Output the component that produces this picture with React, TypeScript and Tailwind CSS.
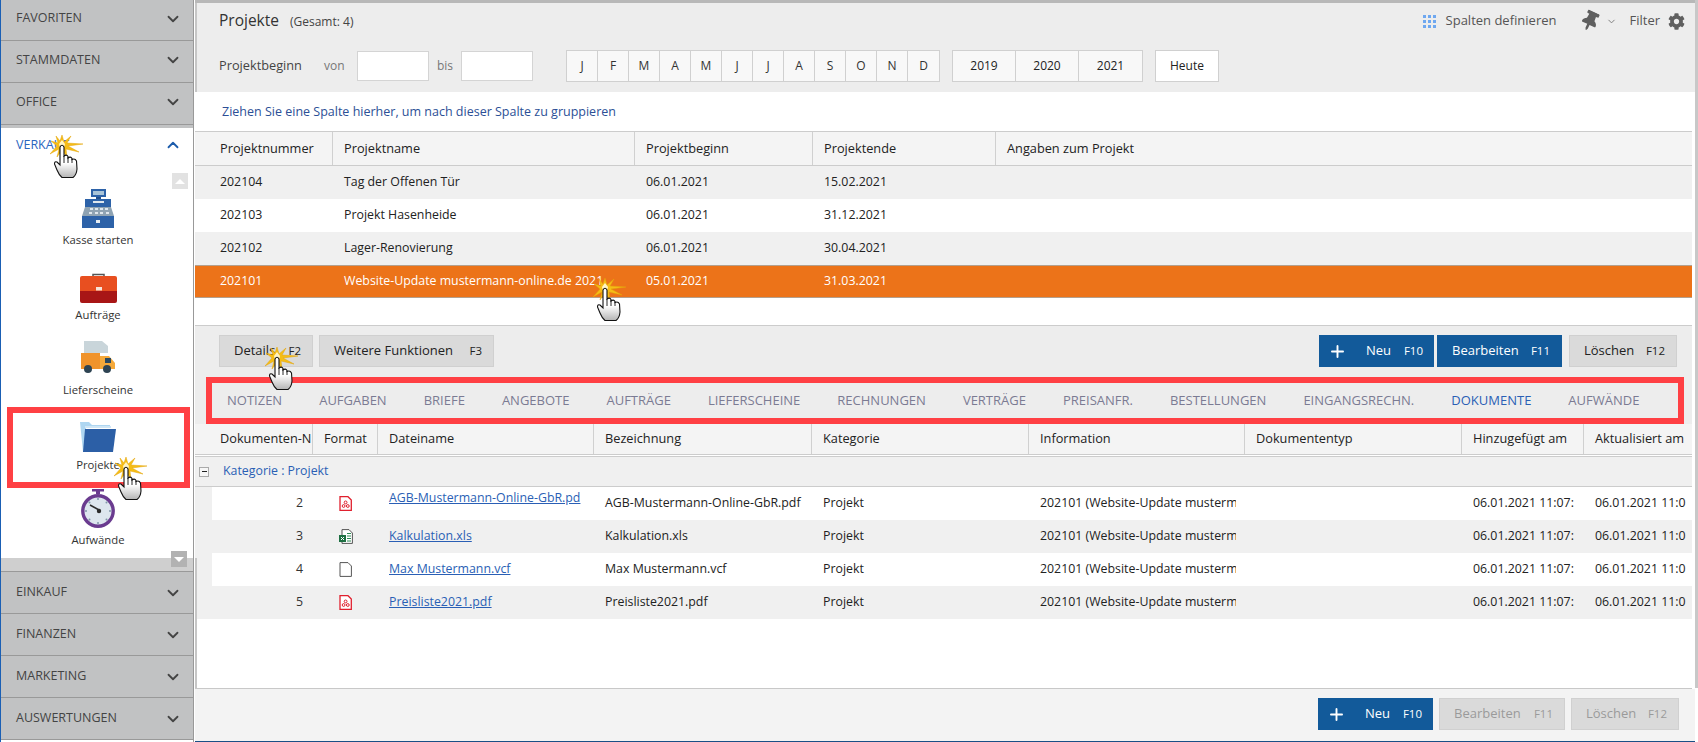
import { ChevronDown, ChevronUp, Plus } from 'lucide-react';
import { FaCog, FaThumbtack } from 'react-icons/fa';

const font = { fontFamily: '"Open Sans", "Noto Sans", sans-serif' };

const months = ['J', 'F', 'M', 'A', 'M', 'J', 'J', 'A', 'S', 'O', 'N', 'D'];
const years = ['2019', '2020', '2021'];

const projects = [
  { nr: '202104', name: 'Tag der Offenen Tür', start: '06.01.2021', end: '15.02.2021', bg: 'bg-[#f0f0f0] text-[#222]' },
  { nr: '202103', name: 'Projekt Hasenheide', start: '06.01.2021', end: '31.12.2021', bg: 'bg-white text-[#222]' },
  { nr: '202102', name: 'Lager-Renovierung', start: '06.01.2021', end: '30.04.2021', bg: 'bg-[#f0f0f0] text-[#222]' },
  { nr: '202101', name: 'Website-Update mustermann-online.de 2021', start: '05.01.2021', end: '31.03.2021', bg: 'bg-[#ec7319] text-white border-y border-[#b3a08e]' },
];

const tabs = ['NOTIZEN', 'AUFGABEN', 'BRIEFE', 'ANGEBOTE', 'AUFTRÄGE', 'LIEFERSCHEINE', 'RECHNUNGEN', 'VERTRÄGE', 'PREISANFR.', 'BESTELLUNGEN', 'EINGANGSRECHN.', 'DOKUMENTE', 'AUFWÄNDE'];

const docs = [
  { nr: '2', type: 'pdf', file: 'AGB-Mustermann-Online-GbR.pd', title: 'AGB-Mustermann-Online-GbR.pdf', bg: 'bg-white' },
  { nr: '3', type: 'xls', file: 'Kalkulation.xls', title: 'Kalkulation.xls', bg: 'bg-[#f0f0f0]' },
  { nr: '4', type: 'vcf', file: 'Max Mustermann.vcf', title: 'Max Mustermann.vcf', bg: 'bg-white' },
  { nr: '5', type: 'pdf', file: 'Preisliste2021.pdf', title: 'Preisliste2021.pdf', bg: 'bg-[#f0f0f0]' },
];

function SideRow({ label, first, upper }: { label: string; first?: boolean; upper?: boolean }) {
  return (
    <div className={`flex items-center justify-between pl-[15px] pr-[11px] bg-[#c1c2c3] border-b border-[#999] ${first ? 'h-[41px]' : 'h-[42px]'} ${upper ? 'pb-[3px]' : ''}`}>
      <span className="text-[12.5px] font-medium text-[#444]">{label}</span>
      <ChevronDown size={18} strokeWidth={2.4} className="text-[#444]" />
    </div>
  );
}

function CashIcon() {
  return (
    <svg width="32" height="39" viewBox="0 0 32 39">
      <rect x="9" y="0" width="15" height="8" fill="#2d62a8" />
      <rect x="11" y="2" width="11" height="4" fill="#a9c4d8" />
      <rect x="14" y="8" width="5" height="2" fill="#24508c" />
      <rect x="3" y="10" width="26" height="8" fill="#2d62a8" />
      <rect x="11" y="12" width="11" height="2" fill="#dfe7ee" />
      <path d="M3 18H29L32 27H0Z" fill="#8fa3b3" />
      <g fill="#dfe7ee">
        <rect x="8" y="19" width="3" height="2" /><rect x="13" y="19" width="3" height="2" /><rect x="18" y="19" width="3" height="2" /><rect x="23" y="19" width="3" height="2" />
        <rect x="7" y="23" width="3" height="2" /><rect x="13" y="23" width="3" height="2" /><rect x="18" y="23" width="3" height="2" /><rect x="24" y="23" width="3" height="2" />
      </g>
      <rect x="0" y="27" width="32" height="12" fill="#2d62a8" />
      <rect x="14" y="31" width="4" height="3" fill="#e8eef3" />
    </svg>
  );
}

function CaseIcon() {
  return (
    <svg width="37" height="30" viewBox="0 0 37 30">
      <path d="M13 3V1.5H24V3" fill="none" stroke="#555" strokeWidth="1.5" />
      <path d="M2 3H35A2 2 0 0 1 37 5V19H0V5A2 2 0 0 1 2 3Z" fill="#e84f20" />
      <path d="M0 18H37V28A2 2 0 0 1 35 30H2A2 2 0 0 1 0 28Z" fill="#a81616" />
      <rect x="16" y="14" width="6" height="3.5" fill="#f6e4d8" />
    </svg>
  );
}

function TruckIcon() {
  return (
    <svg width="34" height="32" viewBox="0 0 34 32">
      <path d="M3 0H21L27 5V12H3Z" fill="#c9d5da" />
      <rect x="0" y="12" width="19" height="16" fill="#f0932b" />
      <path d="M19 15H28L34 22V28H19Z" fill="#f5a93a" />
      <rect x="24" y="17" width="6" height="5" fill="#2c4a60" />
      <circle cx="7" cy="28" r="4" fill="#2e4453" />
      <circle cx="26" cy="28" r="4" fill="#2e4453" />
    </svg>
  );
}

function FolderIcon() {
  return (
    <svg width="36" height="30" viewBox="0 0 36 30">
      <path d="M0 0H9L12 3H30V6H6L4 30H3Z" fill="#aed6f1" />
      <path d="M5 4H31V6H5Z" fill="#cfe6f6" />
      <path d="M5 7 H36 L33 30 H3 Z" fill="#2c5fa6" />
    </svg>
  );
}

function WatchIcon() {
  return (
    <svg width="34" height="39" viewBox="0 0 34 39">
      <rect x="11" y="0" width="12" height="2.5" fill="#6a3b8f" />
      <rect x="15" y="2" width="4" height="3" fill="#6a3b8f" />
      <circle cx="17" cy="22" r="15.2" fill="#dde6ee" stroke="#6a3b8f" strokeWidth="3.4" />
      <g fill="#7f96a8">
        <circle cx="17" cy="10" r="1" /><circle cx="17" cy="34" r="1" /><circle cx="5" cy="22" r="1" /><circle cx="29" cy="22" r="1" />
        <circle cx="8.5" cy="13.5" r="1" /><circle cx="25.5" cy="13.5" r="1" /><circle cx="8.5" cy="30.5" r="1" /><circle cx="25.5" cy="30.5" r="1" />
      </g>
      <path d="M9 16L18 21" stroke="#2b2b2b" strokeWidth="1.5" />
      <circle cx="18" cy="22" r="2.2" fill="#2b2b2b" />
    </svg>
  );
}

function SideItem({ label, icon, gap }: { label: string; icon: React.ReactNode; gap: string }) {
  return (
    <div className="h-[75px] flex flex-col items-center justify-end">
      <div className={gap}>{icon}</div>
      <span className="h-[20px] leading-[20px] text-[11.3px] text-[#333]">{label}</span>
    </div>
  );
}

// Klick-Cursor mit gelbem Stern, liegt über dem Inhalt
function ClickHand({ pos }: { pos: string }) {
  return (
    <svg width="34" height="43" viewBox="0 0 34 43" className={`absolute ${pos}`}>
      <defs>
        <linearGradient id="handFill" x1="0" y1="0" x2="0" y2="1">
          <stop offset="0.55" stopColor="#ffffff" />
          <stop offset="1" stopColor="#b4b4b4" />
        </linearGradient>
      </defs>
      <polygon points="12,0 14,7 21,1 17,8 33,9 18,11 29,17 16,14 17,22 12,15 7,22 9,14 0,19 7,11 1,6 8,8 6,1 10,6" fill="#f6bd16" stroke="#e3a50a" strokeWidth="0.5" />
      <polygon points="12,5 15,9 14,13 10,13 9,9" fill="#fff3c4" />
      <path d="M10 12Q12 8.5 14 12L14 21Q16.5 19 18 21.5L18 23Q20.5 21 22 23.5L22 24.5Q25 23 26.5 26L27 34Q26.5 40 23 42.5L12 42.5Q9 40 7 35L4.5 29Q4.5 26 7 27L10 30Z" fill="url(#handFill)" stroke="#111" strokeWidth="1.1" />
      <path d="M14 21L14 28M18 22L18 28M22 24L22 28" stroke="#111" strokeWidth="0.9" fill="none" />
    </svg>
  );
}

function ActionButton({ label, fkey, width, variant, plus }: { label: string; fkey: string; width: string; variant: 'blue' | 'gray' | 'off'; plus?: boolean }) {
  const look = {
    blue: 'bg-[#125a9a] text-white border-[#125a9a]',
    gray: 'bg-[#dadada] text-[#222] border-[#d0d0d0]',
    off: 'bg-[#dadada] text-[#9a9a9a] border-[#d0d0d0]',
  }[variant];
  return (
    <div className={`h-[32px] flex items-center border ${plus ? 'pl-[8px] pr-[10px]' : 'pl-[14px] pr-[11px]'} ${width} ${look}`}>
      {plus && <Plus size={19} strokeWidth={2.4} className="mr-[19px]" />}
      <span className="text-[13px] font-medium">{label}</span>
      <span className="ml-auto text-[11.5px]">{fkey}</span>
    </div>
  );
}

function PdfIcon() {
  return (
    <svg width="13" height="15" viewBox="0 0 13 15">
      <path d="M1 .7H9L12.3 4V14.3H1Z" fill="#fff" stroke="#e0202e" strokeWidth="1.3" />
      <circle cx="6.6" cy="6.4" r="1.4" fill="none" stroke="#e0202e" />
      <circle cx="4.6" cy="10" r="1.4" fill="none" stroke="#e0202e" />
      <circle cx="8.8" cy="10" r="1.4" fill="none" stroke="#e0202e" />
    </svg>
  );
}

function XlsIcon() {
  return (
    <svg width="14" height="15" viewBox="0 0 14 15">
      <path d="M3 .6H10L13.4 4V14.4H3Z" fill="#fff" stroke="#555" />
      <g stroke="#2e8b57" strokeWidth="1">
        <path d="M8 4.5H12M8 7H12M8 9.5H12M8 12H12" />
      </g>
      <rect x="0" y="6" width="7" height="7" fill="#1d6f42" />
      <path d="M2 8L5 11M5 8L2 11" stroke="#fff" />
    </svg>
  );
}

function FileIcon() {
  return (
    <svg width="13" height="15" viewBox="0 0 13 15">
      <path d="M1 .6H9L12.4 4V14.4H1Z" fill="#fff" stroke="#555" />
    </svg>
  );
}

const headCell = 'flex items-center pl-[11px] border-r border-[#d0d0d0] text-[12.75px] font-medium text-[#222] overflow-hidden whitespace-nowrap';
const rowCell = 'flex items-center pl-[11px] text-[12.35px] overflow-hidden whitespace-nowrap';

export default function App() {
  return (
    <div className="relative flex w-[1698px] h-[742px] overflow-hidden bg-white" style={font}>
      {/* Navigation links */}
      <aside className="w-[194px] shrink-0 flex flex-col border-l border-[#1a5fb4] border-r-[#999] border-r h-[742px]">
        <SideRow label="FAVORITEN" first upper />
        <SideRow label="STAMMDATEN" upper />
        <SideRow label="OFFICE" upper />
        <div className="h-[3px] bg-[#c1c2c3]" />
        <div className="relative h-[430px] ml-[2px] bg-white">
          <div className="h-[47px] flex items-center justify-between pl-[13px] pr-[11px] pb-[13px]">
            <span className="text-[12.5px] font-medium text-[#2a66c0]">VERKAUF</span>
            <ChevronUp size={18} strokeWidth={2.4} className="text-[#1c5cab]" />
          </div>
          <div className="absolute right-[5px] top-[45px] w-[16px] h-[16px] bg-[#e2e2e2] flex items-center justify-center">
            <div className="w-0 h-0 border-x-[5px] border-x-transparent border-b-[5px] border-b-white" />
          </div>
          <SideItem label="Kasse starten" icon={<CashIcon />} gap="mb-[2px]" />
          <SideItem label="Aufträge" icon={<CaseIcon />} gap="mb-[2px]" />
          <SideItem label="Lieferscheine" icon={<TruckIcon />} gap="mb-[7px]" />
          <SideItem label="Projekte" icon={<FolderIcon />} gap="mb-[3px]" />
          <SideItem label="Aufwände" icon={<WatchIcon />} gap="mb-[2px]" />
        </div>
        <div className="h-[14px] bg-[#cfcfcf] border-b border-[#999]" />
        <SideRow label="EINKAUF" />
        <SideRow label="FINANZEN" />
        <SideRow label="MARKETING" />
        <SideRow label="AUSWERTUNGEN" />
      </aside>

      {/* Hauptbereich */}
      <main className="w-[1500px] shrink-0 flex flex-col h-[742px] ml-[1px]">
        <div className="h-[3px] bg-[#b8b8b8]" />
        <div className="h-[89px] bg-[#ededed] border-l-[2px] border-[#c6c6c6] pl-[22px] pr-[10px]">
          <div className="flex items-center h-[36px]">
            <span className="text-[15.5px] font-medium text-[#333]">Projekte</span>
            <span className="text-[12px] text-[#444] ml-[11px] mt-[1px]">(Gesamt: 4)</span>
            <div className="ml-auto flex items-center">
              <svg width="13" height="13" viewBox="0 0 13 13" fill="#6fa8f0">
                <rect x="0" y="0" width="3" height="3" /><rect x="5" y="0" width="3" height="3" /><rect x="10" y="0" width="3" height="3" />
                <rect x="0" y="5" width="3" height="3" /><rect x="5" y="5" width="3" height="3" /><rect x="10" y="5" width="3" height="3" />
                <rect x="0" y="10" width="3" height="3" /><rect x="5" y="10" width="3" height="3" /><rect x="10" y="10" width="3" height="3" />
              </svg>
              <span className="ml-[10px] text-[13px] text-[#555]">Spalten definieren</span>
              <FaThumbtack size={20} className="ml-[24px] rotate-[25deg] text-[#5f5f5f]" />
              <ChevronDown size={11} className="ml-[6px] text-[#777]" />
              <span className="ml-[12px] text-[13px] text-[#555]">Filter</span>
              <FaCog size={17} className="ml-[8px] text-[#5f5f5f]" />
            </div>
          </div>
          <div className="flex items-center h-[32px] mt-[11px]">
            <span className="text-[12.75px] text-[#444] w-[105px]">Projektbeginn</span>
            <span className="text-[12px] text-[#777] w-[33px]">von</span>
            <div className="w-[72px] h-[30px] bg-white border border-[#d4d4d4]" />
            <span className="text-[12px] text-[#777] w-[32px] pl-[8px]">bis</span>
            <div className="w-[72px] h-[30px] bg-white border border-[#d4d4d4]" />
            <div className="flex ml-[33px] border border-[#d0d0d0] bg-[#f8f8f8]">
              {months.map((m, i) => (
                <div key={i} className="w-[31px] h-[30px] flex items-center justify-center text-[12px] text-[#333] border-r border-[#d0d0d0] last:border-r-0">{m}</div>
              ))}
            </div>
            <div className="flex ml-[12px] border border-[#d0d0d0] bg-[#f8f8f8]">
              {years.map((y) => (
                <div key={y} className="w-[63px] h-[30px] flex items-center justify-center text-[12px] text-[#222] border-r border-[#d0d0d0] last:border-r-0">{y}</div>
              ))}
            </div>
            <div className="ml-[12px] w-[64px] h-[32px] flex items-center justify-center bg-white border border-[#d0d0d0] text-[12px] text-[#222]">Heute</div>
          </div>
        </div>
        <div className="h-[39px] bg-white flex items-center pl-[27px] pt-[1px] text-[12.5px] text-[#2c4f96]">
          Ziehen Sie eine Spalte hierher, um nach dieser Spalte zu gruppieren
        </div>

        {/* Projekttabelle */}
        <div className="grid grid-cols-[138px_302px_178px_183px_1fr] h-[35px] bg-[#f4f4f4] border-y border-[#cccccc] mr-[3px]">
          <div className={`${headCell} pl-[25px]`}>Projektnummer</div>
          <div className={headCell}>Projektname</div>
          <div className={headCell}>Projektbeginn</div>
          <div className={headCell}>Projektende</div>
          <div className={`${headCell} border-r-0`}>Angaben zum Projekt</div>
        </div>
        {projects.map((p) => (
          <div key={p.nr} className={`grid grid-cols-[138px_302px_178px_183px_1fr] h-[33px] mr-[3px] ${p.bg}`}>
            <div className={`${rowCell} pl-[25px]`}>{p.nr}</div>
            <div className={rowCell}>{p.name}</div>
            <div className={rowCell}>{p.start}</div>
            <div className={rowCell}>{p.end}</div>
            <div />
          </div>
        ))}
        <div className="h-[28px] bg-white border-b border-[#cccccc] mr-[3px]" />

        {/* Werkzeugleiste */}
        <div className="h-[51px] bg-[#ededed] flex items-start pt-[9px] pl-[24px] pr-[15px] mr-[3px]">
          <ActionButton label="Details" fkey="F2" width="w-[94px]" variant="gray" />
          <div className="w-[6px]" />
          <ActionButton label="Weitere Funktionen" fkey="F3" width="w-[175px]" variant="gray" />
          <div className="ml-auto flex">
            <ActionButton label="Neu" fkey="F10" width="w-[115px]" variant="blue" plus />
            <div className="w-[3px]" />
            <ActionButton label="Bearbeiten" fkey="F11" width="w-[125px]" variant="blue" />
            <div className="w-[7px]" />
            <ActionButton label="Löschen" fkey="F12" width="w-[108px]" variant="gray" />
          </div>
        </div>

        {/* Reiter im roten Rahmen */}
        <div className="bg-[#ededed] mr-[3px] pl-[11px] pr-[8px]">
          <div className="h-[47px] border-[6px] border-[#ff4044] flex items-center pl-[15px] gap-[37px] text-[13px] font-medium text-[#7b7b93] whitespace-nowrap">
            {tabs.map((t) => (
              <span key={t} className={t === 'DOKUMENTE' ? 'text-[#2a5fb5]' : ''}>{t}</span>
            ))}
          </div>
        </div>

        {/* Dokumententabelle */}
        <div className="grid grid-cols-[118px_65px_216px_218px_217px_216px_217px_122px_1fr] h-[31px] bg-[#f4f4f4] border-b border-[#cccccc] mr-[3px]">
          <div className={`${headCell} pl-[25px]`}>Dokumenten-N</div>
          <div className={headCell}>Format</div>
          <div className={headCell}>Dateiname</div>
          <div className={headCell}>Bezeichnung</div>
          <div className={headCell}>Kategorie</div>
          <div className={headCell}>Information</div>
          <div className={headCell}>Dokumententyp</div>
          <div className={headCell}>Hinzugefügt am</div>
          <div className={`${headCell} border-r-0`}>Aktualisiert am</div>
        </div>
        <div className="h-[31px] bg-[#f0f0f0] border-t border-b border-[#cccccc] flex items-center mr-[3px] mt-[1px] pl-[4px]">
          <div className="w-[10px] h-[10px] border border-[#aaa] bg-[#f6f6f6] flex items-center justify-center">
            <div className="w-[5px] h-px bg-[#222]" />
          </div>
          <span className="ml-[14px] text-[12.35px] text-[#2a5fb5]">Kategorie : Projekt</span>
        </div>
        {docs.map((d) => (
          <div key={d.nr} className={`grid grid-cols-[118px_65px_216px_218px_217px_216px_217px_122px_1fr] h-[33px] mr-[3px] text-[#222] ${d.bg}`}>
            <div className="flex items-center justify-end pr-[10px] text-[12.35px] text-[#333] border-l-[17px] border-[#f0f0f0]">{d.nr}</div>
            <div className="flex items-center justify-center">
              {d.type === 'pdf' && <PdfIcon />}
              {d.type === 'xls' && <XlsIcon />}
              {d.type === 'vcf' && <FileIcon />}
            </div>
            <div className={rowCell}>
              <span className={`underline text-[#2a5fb5] ${d.nr === '2' ? '-mt-[10px]' : ''}`}>{d.file}</span>
            </div>
            <div className={`${rowCell} mr-[10px]`}>{d.title}</div>
            <div className={rowCell}>Projekt</div>
            <div className={`${rowCell} mr-[9px]`}>202101 (Website-Update mustermann</div>
            <div />
            <div className={rowCell}>06.01.2021 11:07:</div>
            <div className={rowCell}>06.01.2021 11:0</div>
          </div>
        ))}
        <div className="flex-1 bg-white border-b border-[#c8c8c8] mr-[3px]" />
        <div className="h-[53px] bg-[#f3f3f3] border-b border-[#1a4f86] flex justify-end items-start pt-[9px] pr-[16px]">
          <ActionButton label="Neu" fkey="F10" width="w-[115px]" variant="blue" plus />
          <div className="w-[6px]" />
          <ActionButton label="Bearbeiten" fkey="F11" width="w-[126px]" variant="off" />
          <div className="w-[6px]" />
          <ActionButton label="Löschen" fkey="F12" width="w-[108px]" variant="off" />
        </div>
      </main>

      {/* rechter Rand */}
      <div className="absolute right-0 top-0 w-[3px] h-[688px] bg-[#c8c8c8]" />
      <div className="absolute left-[195px] top-[558px] w-[2px] h-[130px] bg-[#c6c6c6]" />

      {/* Markierung im Menü */}
      <div className="absolute left-[7px] top-[407px] w-[183px] h-[81px] border-[6px] border-[#ff4044]" />
      <div className="absolute left-[171px] top-[551px] w-[16px] h-[16px] bg-[#b2b2b2] flex items-center justify-center">
        <div className="w-0 h-0 border-x-[5px] border-x-transparent border-t-[5px] border-t-white" />
      </div>

      <ClickHand pos="left-[50px] top-[135px]" />
      <ClickHand pos="left-[114px] top-[457px]" />
      <ClickHand pos="left-[593px] top-[278px]" />
      <ClickHand pos="left-[265px] top-[347px]" />
    </div>
  );
}
